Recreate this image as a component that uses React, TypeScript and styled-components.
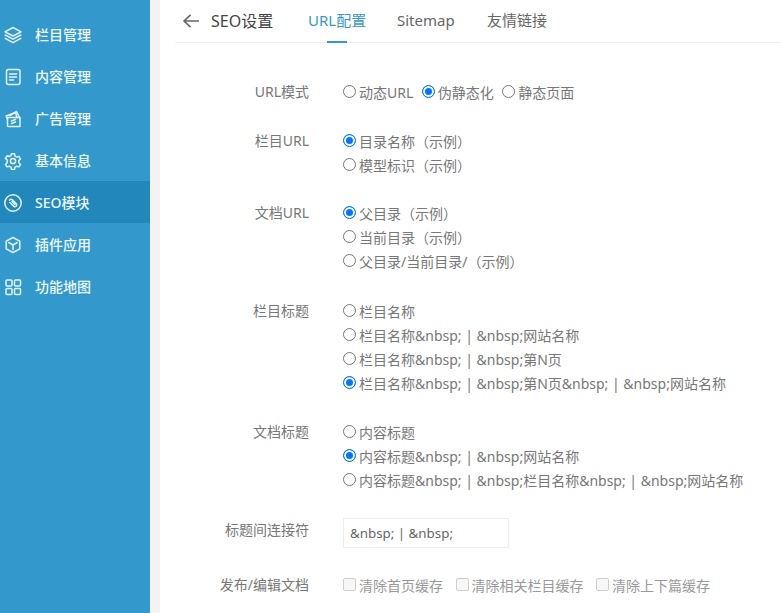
import React from "react";
import styled, { createGlobalStyle } from "styled-components";

const Global = createGlobalStyle`
  html, body { margin: 0; padding: 0; background: #fff; overflow: hidden; }
  body { font-family: "Noto Sans", "Noto Sans CJK SC", sans-serif; }
`;

const Page = styled.div`
  display: flex;
  width: 781px;
  height: 613px;
  overflow: hidden;
`;

const Sidebar = styled.nav`
  width: 150px;
  flex: none;
  background: #3399cc;
  padding-top: 13px;
  box-sizing: border-box;
`;

const NavItem = styled.div<{ $active?: boolean }>`
  height: 42px;
  display: flex;
  align-items: center;
  padding-left: 4px;
  gap: 13px;
  color: #eef7fb;
  font-size: 14px;
  font-weight: 500;
  box-sizing: border-box;
  background: ${(p) => (p.$active ? "#2288bb" : "transparent")};
`;

const NavIcon = styled.svg`
  width: 18px;
  height: 18px;
  flex: none;
  margin-top: 2px;
  fill: none;
  stroke: #e4f2f8;
  stroke-width: 1.5;
  stroke-linecap: round;
  stroke-linejoin: round;
`;

const Gutter = styled.div`
  width: 10px;
  flex: none;
  background: #f3f3f3;
`;

const Main = styled.main`
  flex: 1;
  min-width: 0;
  padding-left: 15px;
`;

const Header = styled.header`
  height: 43px;
  box-sizing: border-box;
  border-bottom: 1px solid #eeeeee;
  display: flex;
  align-items: center;
  color: #555;
  font-size: 15px;
  padding-bottom: 3px;
`;

const BackIcon = styled.svg`
  width: 18px;
  height: 18px;
  margin-left: 7px;
  margin-right: 11px;
  margin-top: 3px;
  fill: none;
  stroke: #666;
  stroke-width: 1.6;
  flex: none;
`;

const Title = styled.span`
  width: 97px;
  flex: none;
  color: #444;
  font-size: 16px;
`;

const Tab = styled.span<{ $active?: boolean; $width: number }>`
  position: relative;
  width: ${(p) => p.$width}px;
  flex: none;
  color: ${(p) => (p.$active ? "#3399cc" : "#666")};
  &::after {
    content: "";
    display: ${(p) => (p.$active ? "block" : "none")};
    position: absolute;
    left: 19px;
    bottom: -13px;
    width: 20px;
    height: 2px;
    background: #3399cc;
  }
`;

const Form = styled.section`
  padding-top: 37px;
  font-size: 14px;
  color: #777;
`;

const Row = styled.div<{ $gap?: number }>`
  display: flex;
  margin-bottom: ${(p) => p.$gap ?? 25}px;
`;

const Label = styled.div`
  width: 134px;
  flex: none;
  text-align: right;
  margin-right: 34px;
  line-height: 24px;
  color: #777;
`;

const Options = styled.div`
  display: flex;
  flex-direction: column;
`;

const InlineOptions = styled.div<{ $gap: number }>`
  display: flex;
  gap: ${(p) => p.$gap}px;
`;

const Option = styled.label`
  display: flex;
  align-items: center;
  height: 24px;
  white-space: nowrap;
`;

const RadioMark = styled.span<{ $on?: boolean }>`
  width: 13px;
  height: 13px;
  box-sizing: border-box;
  flex: none;
  margin-right: 3px;
  margin-bottom: 2px;
  border-radius: 50%;
  border: ${(p) => (p.$on ? "1px solid #0075ff" : "1px solid #767676")};
  background: ${(p) => (p.$on ? "#0075ff" : "#fff")};
  box-shadow: ${(p) => (p.$on ? "inset 0 0 0 2px #fff" : "none")};
`;

const CheckMark = styled.span`
  width: 13px;
  height: 13px;
  box-sizing: border-box;
  flex: none;
  margin-right: 3px;
  margin-bottom: 2px;
  border-radius: 2px;
  border: 1px solid #cfcfcf;
  background: #f7f7f7;
`;

const TextInput = styled.input`
  width: 166px;
  height: 30px;
  box-sizing: border-box;
  border: 1px solid #eeeeee;
  padding: 0 6px;
  margin: 0;
  outline: none;
  font: inherit;
  font-size: 13.33px;
  color: #666;
  background: #fff;
`;

const DisabledOption = styled(Option)`
  color: #999;
`;

const Radio = ({ on, children }: { on?: boolean; children: React.ReactNode }) => (
  <Option>
    <RadioMark $on={on} />
    {children}
  </Option>
);

const Check = ({ children }: { children: React.ReactNode }) => (
  <DisabledOption>
    <CheckMark />
    {children}
  </DisabledOption>
);

const icons: React.ReactNode[] = [
  <>
    <path d="M9 1.5 17 5.8 9 10 1 5.8Z" />
    <path d="M1.2 9 9 13.2 16.8 9" />
    <path d="M1.2 12.4 9 16.6 16.8 12.4" />
  </>,
  <>
    <rect x="2.5" y="1.5" width="13.5" height="15" rx="2" />
    <path d="M5.5 6h7M5.5 9h7M5.5 12h4" />
  </>,
  <>
    <path d="M3.5 7.5H16V16.5H4.2Q3.5 16.5 3.5 15.5Z" />
    <path d="M3.5 9.5 2.2 6 11.5 2.5 13 7.5" />
    <path d="M6 5.5 12.5 1.5 15.5 7.5" />
    <path d="M7.5 11 11.5 9.5M7.5 13.5 11.5 12" />
  </>,
  <>
    <path d="M7.5 1.8h3l.5 2.3 1.8 1 2.2-.7 1.5 2.6-1.7 1.6v2.1l1.7 1.6-1.5 2.6-2.2-.7-1.8 1-.5 2.3h-3l-.5-2.3-1.8-1-2.2.7-1.5-2.6 1.7-1.6V8l-1.7-1.6 1.5-2.6 2.2.7 1.8-1z" />
    <circle cx="9" cy="9" r="2.6" />
  </>,
  <>
    <circle cx="9" cy="9" r="8.2" />
    <path d="M5.5 6.2a1.7 1.7 0 0 1 2.6-.6l4.3 4.3a1.8 1.8 0 0 1-2.5 2.5L6 8.5" />
    <path d="M8 7.5l3 3" />
  </>,
  <>
    <path d="M9 1.5 15.8 5.2V12.8L9 16.5 2.2 12.8V5.2Z" />
    <path d="M4.8 6.5 9 9 13.2 6.5M9 9V13.5" />
  </>,
  <>
    <rect x="2" y="2" width="6" height="6" rx="1" />
    <rect x="10.5" y="2" width="6" height="6" rx="1" />
    <rect x="2" y="10.5" width="6" height="6" rx="1" />
    <rect x="10.5" y="10.5" width="6" height="6" rx="1" />
  </>,
];

const navLabels = ["栏目管理", "内容管理", "广告管理", "基本信息", "SEO模块", "插件应用", "功能地图"];

export default function App() {
  return (
    <Page>
      <Global />
      <Sidebar>
        {navLabels.map((label, i) => (
          <NavItem key={label} $active={i === 4}>
            <NavIcon viewBox="0 0 18 18">{icons[i]}</NavIcon>
            {label}
          </NavItem>
        ))}
      </Sidebar>
      <Gutter />
      <Main>
        <Header>
          <BackIcon viewBox="0 0 18 18">
            <path d="M17 9H2M8.5 2.8 2 9l6.5 6.2" />
          </BackIcon>
          <Title>SEO设置</Title>
          <Tab $active $width={89}>URL配置</Tab>
          <Tab $width={90}>Sitemap</Tab>
          <Tab $width={70}>友情链接</Tab>
        </Header>
        <Form>
          <Row>
            <Label>URL模式</Label>
            <InlineOptions $gap={8.5}>
              <Radio>动态URL</Radio>
              <Radio on>伪静态化</Radio>
              <Radio>静态页面</Radio>
            </InlineOptions>
          </Row>
          <Row $gap={24}>
            <Label>栏目URL</Label>
            <Options>
              <Radio on>目录名称（示例）</Radio>
              <Radio>模型标识（示例）</Radio>
            </Options>
          </Row>
          <Row $gap={26}>
            <Label>文档URL</Label>
            <Options>
              <Radio on>父目录（示例）</Radio>
              <Radio>当前目录（示例）</Radio>
              <Radio>父目录/当前目录/（示例）</Radio>
            </Options>
          </Row>
          <Row>
            <Label>栏目标题</Label>
            <Options>
              <Radio>栏目名称</Radio>
              <Radio>栏目名称&amp;nbsp; | &amp;nbsp;网站名称</Radio>
              <Radio>栏目名称&amp;nbsp; | &amp;nbsp;第N页</Radio>
              <Radio on>栏目名称&amp;nbsp; | &amp;nbsp;第N页&amp;nbsp; | &amp;nbsp;网站名称</Radio>
            </Options>
          </Row>
          <Row $gap={26}>
            <Label>文档标题</Label>
            <Options>
              <Radio>内容标题</Radio>
              <Radio on>内容标题&amp;nbsp; | &amp;nbsp;网站名称</Radio>
              <Radio>内容标题&amp;nbsp; | &amp;nbsp;栏目名称&amp;nbsp; | &amp;nbsp;网站名称</Radio>
            </Options>
          </Row>
          <Row>
            <Label>标题间连接符</Label>
            <TextInput defaultValue={"&nbsp; | &nbsp;"} />
          </Row>
          <Row>
            <Label>发布/编辑文档</Label>
            <InlineOptions $gap={12.5}>
              <Check>清除首页缓存</Check>
              <Check>清除相关栏目缓存</Check>
              <Check>清除上下篇缓存</Check>
            </InlineOptions>
          </Row>
        </Form>
      </Main>
    </Page>
  );
}
